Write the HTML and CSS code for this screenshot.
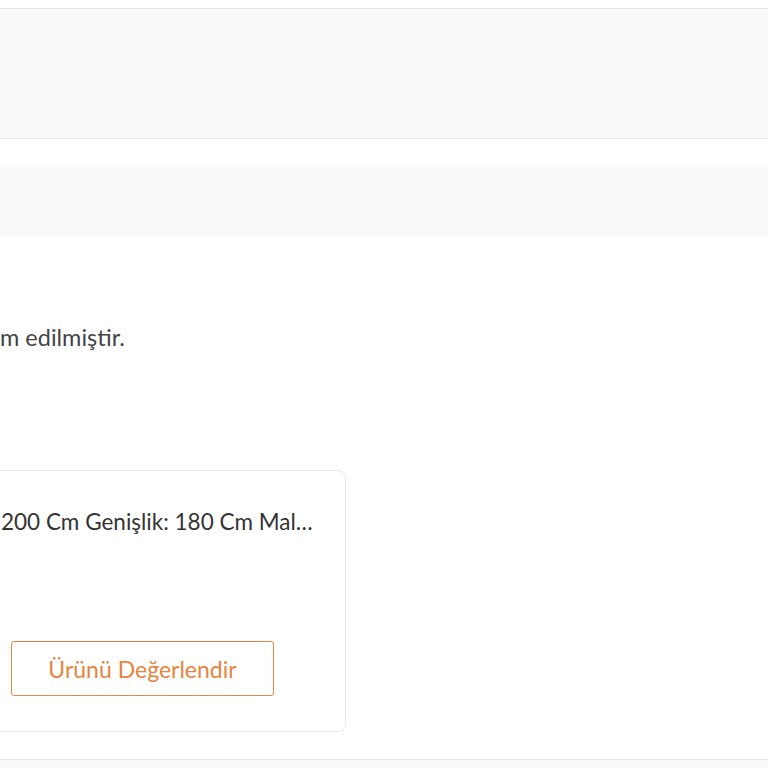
FILE: index.html
```html
<!DOCTYPE html>
<html lang="tr">
<head>
  <meta charset="UTF-8">
  <meta name="viewport" content="width=device-width, initial-scale=1">
  <title>Siparişlerim</title>
  <link rel="stylesheet" href="styles.css">
</head>
<body>

  <!-- Üst bilgi kutusu -->
  <div class="order-head"></div>

  <!-- Adım çubuğu -->
  <div class="order-steps"></div>

  <p class="order-msg">m edilmiştir.</p>

  <!-- Ürün kartı -->
  <div class="product-card">
    <div class="product-title">200 Cm Genişlik: 180 Cm Mal…</div>
    <div class="product-actions">
      <button class="rate-btn">Ürünü Değerlendir</button>
    </div>
  </div>

  <div class="order-foot"></div>

</body>
</html>
```

FILE: styles.css
```css
* { margin: 0; padding: 0; box-sizing: border-box; }

body {
  font-family: 'Lato', 'Open Sans', sans-serif;
  background-color: #fff;
  color: #333;
  overflow: hidden;
}

.order-head {
  margin-top: 8px;
  height: 131px;
  background-color: #fafafa;
  border-top: 1px solid #e6e6e6;
  border-bottom: 1px solid #e6e6e6;
}

.order-steps {
  margin-top: 26px;
  height: 71px;
  background-color: #fafafa;
}

.order-msg {
  margin-top: 86px;
  font-size: 23.5px;
  line-height: 30px;
  color: #444;
  white-space: nowrap;
}

.product-card {
  margin-top: 118px;
  margin-left: -20px;
  width: 366px;
  padding: 36px 20px 35px 20px;
  border: 1px solid #e9e9e9;
  border-radius: 8px;
}

.product-title {
  font-size: 22.5px;
  line-height: 30px;
  color: #333;
  white-space: nowrap;
}

.product-actions {
  margin-top: 104px;
  padding-left: 10px;
}

.rate-btn {
  width: 263px;
  height: 55px;
  background: #fff;
  border: 1px solid #e6883f;
  border-radius: 3px;
  color: #e5853f;
  font-family: inherit;
  font-size: 23px;
  cursor: pointer;
}

.order-foot {
  margin-top: 27px;
  height: 40px;
  background-color: #fafafa;
  border-top: 1px solid #e6e6e6;
}
```
